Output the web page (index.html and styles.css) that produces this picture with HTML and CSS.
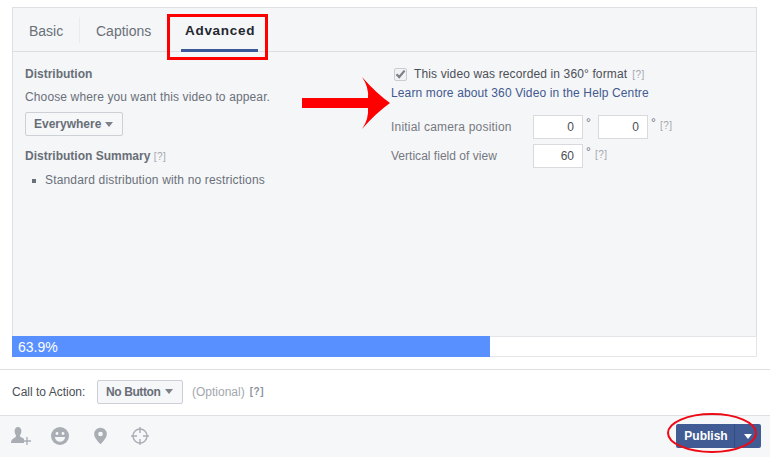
FILE: index.html
```html
<!DOCTYPE html>
<html lang="en">
<head>
<meta charset="utf-8">
<title>Video settings</title>
<link rel="stylesheet" href="styles.css">
</head>
<body>
<div class="page">
  <div class="upper">
    <div class="panel">
      <div class="tabs">
        <div class="tab tab-basic">Basic</div>
        <div class="tab tab-captions">Captions</div>
        <div class="tab tab-active">Advanced</div>
      </div>
      <div class="cols">
        <div class="col-left">
          <div class="heading">Distribution</div>
          <div class="line choose">Choose where you want this video to appear.</div>
          <div class="btn btn-every">Everywhere <span class="caret"></span></div>
          <div class="heading summary">Distribution Summary <span class="help">[?]</span></div>
          <ul class="bullets"><li>Standard distribution with no restrictions</li></ul>
        </div>
        <div class="col-right">
          <div class="check-row">
            <span class="checkbox"><svg width="11" height="10" viewBox="0 0 11 10"><path d="M1.5 5.2 L4.2 8 L9.6 1.6" fill="none" stroke="#7b7f87" stroke-width="2.2"/></svg></span>
            <span class="dark">This video was recorded in 360° format</span> <span class="help">[?]</span>
          </div>
          <div class="learn">Learn more about 360 Video in the Help Centre</div>
          <div class="field-row row-camera">
            <span class="label">Initial camera position</span>
            <span class="num">0</span><span class="deg">°</span>
            <span class="num">0</span><span class="deg">°</span>
            <span class="help">[?]</span>
          </div>
          <div class="field-row row-fov">
            <span class="label">Vertical field of view</span>
            <span class="num">60</span><span class="deg">°</span>
            <span class="help">[?]</span>
          </div>
        </div>
      </div>
    </div>
    <div class="progress"><div class="fill" style="width:478px">63.9%</div></div>
  </div>
  <div class="cta">
    <span class="cta-label">Call to Action:</span>
    <div class="btn btn-none">No Button <span class="caret"></span></div>
    <span class="optional">(Optional)</span> <span class="help help-dark">[?]</span>
  </div>
  <div class="footer">
    <div class="icons">
      <svg class="icon" width="20" height="20" viewBox="0 0 20 20"><path fill="#a9adb4" d="M7 1c2.200 0 3.400 1.800 3.400 4 0 1.900-.7 3.400-1.500 4.300 0 1 .4 1.600 1.400 2 1.100.5 2.200 1 2.700 1.700V17H0c0-2.200.8-3.600 2.400-4.600 1.400-.8 2.700-1.400 2.700-3C4.200 8.400 3.600 6.900 3.600 5 3.600 2.800 4.800 1 7 1z"/><path stroke="#a9adb4" stroke-width="1.300" d="M12 15h8M16 11v8"/></svg>
      <svg class="icon" width="18" height="18" viewBox="0 0 18 18"><circle cx="9" cy="9" r="9" fill="#a9adb4"/><circle cx="6" cy="6.500" r="1.400" fill="#f6f7f9"/><circle cx="12" cy="6.500" r="1.400" fill="#f6f7f9"/><path d="M3.800 10h10.400c-.4 3-2.500 4.800-5.200 4.800S4.200 13 3.800 10z" fill="#f6f7f9"/></svg>
      <svg class="icon" width="13" height="18" viewBox="0 0 14 18"><path fill-rule="evenodd" fill="#a9adb4" d="M7 0a6.800 6.800 0 0 1 6.800 6.800C13.800 11 9.500 15 7 18 4.500 15 .2 11 .2 6.800A6.800 6.800 0 0 1 7 0zm0 4.300a2.500 2.500 0 1 0 0 5 2.500 2.500 0 0 0 0-5z"/></svg>
      <svg class="icon" width="18" height="18" viewBox="0 0 18 18"><circle cx="9" cy="9" r="7" fill="none" stroke="#a9adb4" stroke-width="1.400"/><path stroke="#a9adb4" stroke-width="1.400" d="M9 0v6M9 12v6M0 9h6M12 9h6"/></svg>
    </div>
    <div class="publish"><span class="pub-label">Publish</span><span class="pub-menu"><span class="pub-caret"></span></span></div>
  </div>

  <div class="mark-tab"></div>
  <svg class="mark-arrow" width="88" height="52" viewBox="0 0 88 52"><path fill="#fe0000" d="M0 21H66Q67 10 60 0Q74 16 88 26Q74 36 60 52Q67 42 66 31H0Z"/></svg>
  <svg class="mark-ellipse" width="90" height="40" viewBox="0 0 90 40"><ellipse cx="45" cy="20" rx="44" ry="19" fill="none" stroke="#ee0a14" stroke-width="2"/></svg>
</div>
</body>
</html>
```
FILE: styles.css
```css
* { box-sizing: border-box; }
html, body { margin: 0; padding: 0; background: #fff; }
body { font-family: "Liberation Sans", Arial, sans-serif; font-size: 12px; color: #6a7078; }
.page { position: relative; width: 770px; height: 457px; overflow: hidden; }
.upper { padding: 7px 13px 0 12px; height: 370px; border-bottom: 1px solid #dddfe2; }
.panel { height: 329px; background: #f5f6f8; border: 1px solid #dddfe2; border-bottom: 0; }
.tabs { display: flex; height: 44px; border-bottom: 1px solid #dddfe2; }
.tab { font-size: 14px; padding-top: 15px; height: 43px; }
.tab-basic { width: 67px; padding-left: 16px; color: #6a7078; position: relative; }
.tab-basic::after { content: ""; position: absolute; right: 0; top: 9px; height: 26px; width: 1px; background: #e9ebee; }
.tab-captions { padding-left: 16px; width: 85px; color: #6a7078; }
.tab-active { margin-left: 16px; width: 77px; padding-left: 4px; font-weight: bold; font-size: 13.500px; color: #23272f; border-bottom: 3px solid #3b5998; height: 44px; letter-spacing: .7px; white-space: nowrap; }
.cols { display: flex; padding: 15px 0 0 12px; }
.col-left { width: 366px; }
.col-right { flex: 1; margin-top: -1px; }
.heading { font-weight: bold; font-size: 12px; color: #686e77; height: 15px; line-height: 15px; }
.line { margin-top: 8px; height: 15px; line-height: 15px; }
.choose { letter-spacing: .13px; }
.btn { display: inline-flex; align-items: center; height: 24px; background: #f6f7f9; border: 1px solid #cdd0d6; border-radius: 2px; font-weight: bold; font-size: 12px; color: #686e77; padding: 0 8px; white-space: nowrap; }
.btn-every { margin-top: 7px; width: 98px; }
.caret { display: inline-block; width: 0; height: 0; border: 4.500px solid transparent; border-top: 5px solid #7d8188; border-bottom: 0; margin-left: 4px; }
.summary { margin-top: 13px; }
.help { font-weight: normal; font-size: 10px; color: #a3a7ad; letter-spacing: .5px; }
.bullets { list-style: none; margin: 9px 0 0; padding: 0 0 0 20px; position: relative; height: 15px; line-height: 15px; letter-spacing: .17px; }
.bullets li::before { content: ""; position: absolute; left: 7px; top: 6px; width: 4px; height: 4px; background: #6a7078; }
.check-row { display: flex; align-items: center; gap: 5px; height: 16px; padding-left: 3px; letter-spacing: .13px; }
.checkbox { display: flex; align-items: center; justify-content: center; width: 13px; height: 13px; margin-right: 2px; background: #f1f2f4; border: 1px solid #c9ccd2; border-radius: 2px; }
.dark { color: #4b4f56; }
.learn { color: #43598f; margin-top: 4px; height: 15px; line-height: 15px; font-size: 12px; letter-spacing: .13px; }
.field-row { display: flex; align-items: center; height: 24px; }
.row-camera { margin-top: 14px; }
.row-fov { margin-top: 5px; }
.label { width: 142px; color: #75797f; }
.row-camera .label { letter-spacing: .2px; }
.row-fov .label { letter-spacing: .02px; }
.num { display: block; width: 50px; height: 24px; line-height: 23px; background: #fff; border: 1px solid #d8dade; text-align: right; padding-right: 8px; color: #4b4f56; }
.deg { width: 15px; padding-left: 3px; margin-top: -8px; color: #6a7078; }
.field-row .help { margin-left: -3px; margin-top: -4px; }
.progress { height: 21px; background: #fff; box-shadow: inset 0 0 0 1px #e3e5e8; }
.fill { height: 21px; background: #5890ff; color: #fff; font-size: 14px; line-height: 22px; padding-left: 6px; }
.cta { display: flex; align-items: center; height: 46px; padding: 0 0 2px 12px; border-bottom: 1px solid #dddfe2; }
.cta-label { width: 85px; color: #4b4f56; }
.btn-none { width: 86px; letter-spacing: -.4px; }
.btn-none .caret { margin-left: 5px; }
.optional { margin-left: 9px; color: #a3a7ad; margin-right: 5px; }
.help-dark { color: #8d949e; font-weight: bold; }
.footer { display: flex; align-items: flex-start; justify-content: space-between; height: 41px; background: #f6f7f9; padding: 8px 9px 0 11px; }
.icons { display: flex; align-items: center; margin-top: 2px; }
.icon { display: block; }
.icon:nth-child(1) { margin-right: 20px; }
.icon:nth-child(2) { margin-right: 25px; }
.icon:nth-child(3) { margin-right: 24px; }
.publish { display: flex; height: 24px; width: 85px; background: #415b94; border-radius: 2px; color: #fff; font-weight: bold; font-size: 12px; }
.pub-label { width: 59px; text-align: center; line-height: 24px; border-right: 1px solid #344c82; padding-left: 2px; }
.pub-menu { flex: 1; display: flex; align-items: center; justify-content: center; }
.pub-caret { width: 0; height: 0; border: 4.500px solid transparent; border-top: 5px solid #fff; border-bottom: 0; }
.mark-tab { position: absolute; left: 167px; top: 14px; width: 101px; height: 46px; border: 3px solid #fe0000; }
.mark-arrow { position: absolute; left: 302px; top: 77px; }
.mark-ellipse { position: absolute; left: 667px; top: 413px; }
```
